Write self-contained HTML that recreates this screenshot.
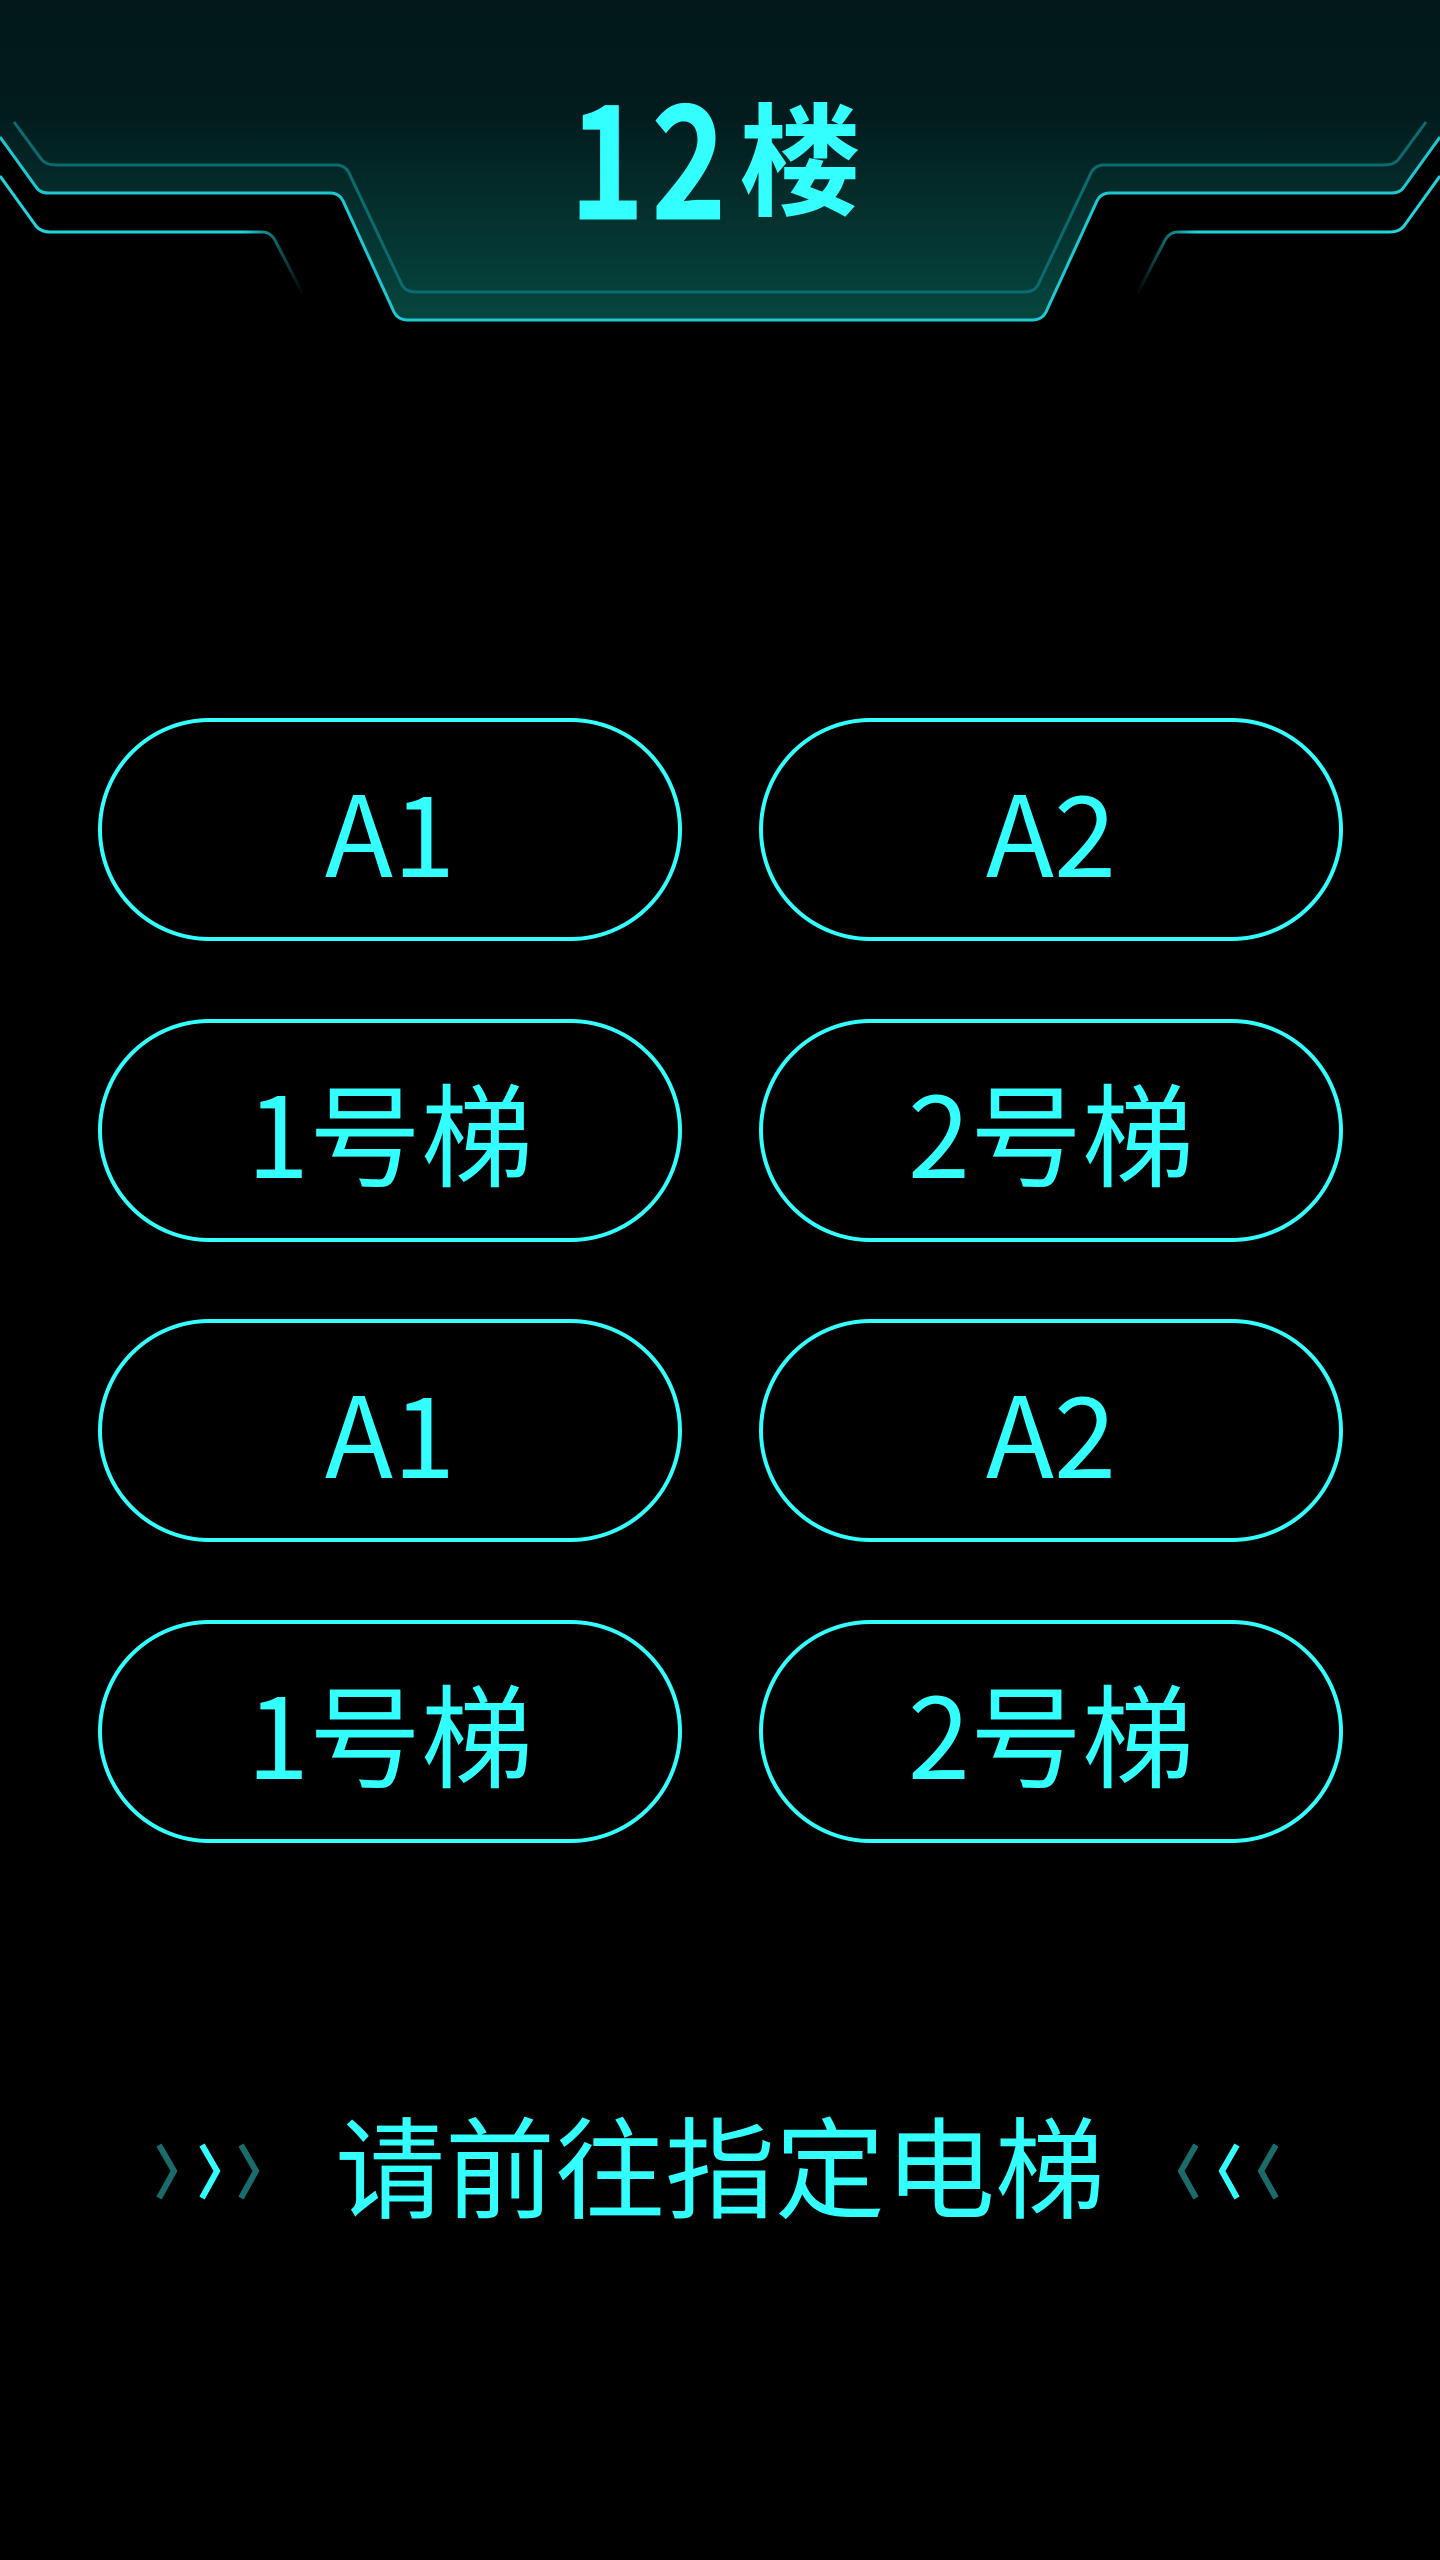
<!DOCTYPE html>
<html><head><meta charset="utf-8">
<style>
html,body{margin:0;padding:0;background:#000;}
body{width:1440px;height:2560px;position:relative;overflow:hidden;font-family:"Liberation Sans","Noto Sans CJK SC",sans-serif;}
.hdr{position:absolute;left:0;top:0;}
.title{position:absolute;left:0;width:1440px;top:84px;text-align:center;color:#33ffff;font-family:"Noto Sans CJK SC","Liberation Sans",sans-serif;font-weight:700;font-size:122px;line-height:140px;letter-spacing:6px;}
.title .d{display:inline-block;transform:scale(1.05,1.3);transform-origin:50% 55%;margin-right:10px;}
.btn{position:absolute;width:576px;height:215px;border:4px solid #33ffff;border-radius:112px;color:#33ffff;font-family:"Noto Sans CJK SC",sans-serif;font-size:112px;line-height:215px;text-align:center;}
.bottom{position:absolute;left:320px;width:800px;top:2092px;text-align:center;color:#33ffff;font-family:"Noto Sans CJK SC",sans-serif;font-size:110px;line-height:140px;}
.chev{position:absolute;top:2140px;}
</style></head><body>
<svg class="hdr" width="1440" height="340" viewBox="0 0 1440 340">
<defs>
<linearGradient id="g" x1="0" y1="0" x2="0" y2="1">
<stop offset="0" stop-color="#02181a"/><stop offset="0.35" stop-color="#021b1d"/><stop offset="1" stop-color="#06463f"/>
</linearGradient>
<linearGradient id="fl" x1="0" y1="0" x2="1" y2="0">
<stop offset="0" stop-color="#1fd6dc"/><stop offset="0.8" stop-color="#1fd6dc"/><stop offset="1" stop-color="#1fd6dc" stop-opacity="0"/>
</linearGradient>
<linearGradient id="fr" x1="1" y1="0" x2="0" y2="0">
<stop offset="0" stop-color="#1fd6dc"/><stop offset="0.8" stop-color="#1fd6dc"/><stop offset="1" stop-color="#1fd6dc" stop-opacity="0"/>
</linearGradient>
</defs>
<path d="M0 0 H1440 V137 L1404 187 Q1400 193 1392 193 H1110 Q1100 193 1096 203 L1046 312 Q1042 320 1032 320 H408 Q398 320 394 312 L344 203 Q340 193 330 193 H48 Q40 193 36 187 L0 137 Z" fill="url(#g)"/>
<path d="M0 137 L36 187 Q40 193 48 193 H330 Q340 193 344 203 L394 312 Q398 320 408 320 H1032 Q1042 320 1046 312 L1096 203 Q1100 193 1110 193 H1392 Q1400 193 1404 187 L1440 137" fill="none" stroke="#1ec8d0" stroke-width="3"/>
<path d="M14 122 L42 160 Q47 165 56 165 H336 Q346 165 350 175 L402 285 Q406 292 416 292 H1024 Q1034 292 1038 285 L1090 175 Q1094 165 1104 165 H1384 Q1393 165 1398 160 L1426 122" fill="none" stroke="#0b6b6e" stroke-width="3"/>
<path d="M0 176 L36 226 Q41 232 50 232 H262 Q272 232 277 244 L304 296" fill="none" stroke="url(#fl)" stroke-width="3"/>
<path d="M1440 176 L1404 226 Q1399 232 1390 232 H1178 Q1168 232 1163 244 L1136 296" fill="none" stroke="url(#fr)" stroke-width="3"/>
</svg>
<div class="title"><span class="d">12</span>楼</div>

<div class="btn" style="left:98px;top:718px;">A1</div>
<div class="btn" style="left:759px;top:718px;">A2</div>
<div class="btn" style="left:98px;top:1019px;">1号梯</div>
<div class="btn" style="left:759px;top:1019px;">2号梯</div>
<div class="btn" style="left:98px;top:1319px;">A1</div>
<div class="btn" style="left:759px;top:1319px;">A2</div>
<div class="btn" style="left:98px;top:1620px;">1号梯</div>
<div class="btn" style="left:759px;top:1620px;">2号梯</div>

<svg class="chev" style="left:150px;" width="130" height="70" viewBox="0 0 130 70">
<path d="M9 5 L24 31 L9 58" fill="none" stroke="#1a6b6b" stroke-width="6"/>
<path d="M52 5 L67 31 L52 58" fill="none" stroke="#33ffff" stroke-width="6"/>
<path d="M91 5 L106 31 L91 58" fill="none" stroke="#1a6b6b" stroke-width="6"/>
</svg>
<div class="bottom">请前往指定电梯</div>
<svg class="chev" style="left:1165px;" width="130" height="70" viewBox="0 0 130 70">
<path d="M31 5 L16 31 L31 58" fill="none" stroke="#1a6b6b" stroke-width="6"/>
<path d="M72 5 L57 31 L72 58" fill="none" stroke="#33ffff" stroke-width="6"/>
<path d="M111 5 L96 31 L111 58" fill="none" stroke="#1a6b6b" stroke-width="6"/>
</svg>
</body></html>
